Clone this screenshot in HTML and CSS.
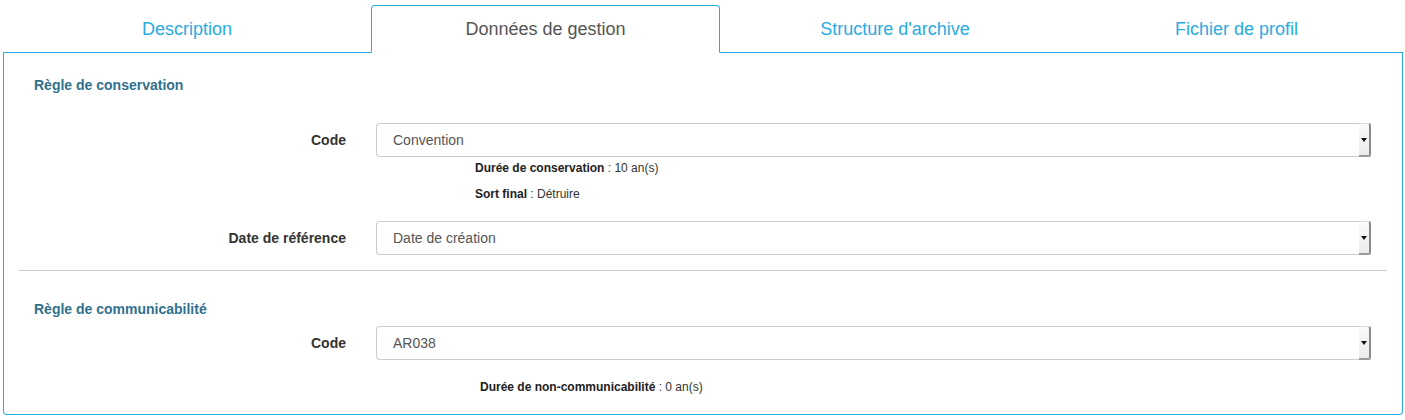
FILE: index.html
```html
<!DOCTYPE html>
<html lang="fr">
<head>
  <meta charset="UTF-8" />
  <title>Profil d'archivage</title>
  <link rel="stylesheet" href="styles.css">
</head>
<body>
  <div class="tabs">
    <div class="tab">Description</div>
    <div class="tab active">Données de gestion</div>
    <div class="tab">Structure d'archive</div>
    <div class="tab">Fichier de profil</div>
  </div>

  <div class="panel">
    <h3 class="section-title">Règle de conservation</h3>

    <div class="form-row first">
      <label class="form-label">Code</label>
      <div class="select">
        <span class="select-value">Convention</span>
        <span class="select-btn"><span class="caret"></span></span>
      </div>
    </div>
    <div class="help">
      <p class="help-line"><b>Durée de conservation</b> : 10 an(s)</p>
      <p class="help-line second"><b>Sort final</b> : Détruire</p>
    </div>

    <div class="form-row date-row">
      <label class="form-label">Date de référence</label>
      <div class="select">
        <span class="select-value">Date de création</span>
        <span class="select-btn"><span class="caret"></span></span>
      </div>
    </div>

    <hr class="divider">

    <h3 class="section-title">Règle de communicabilité</h3>

    <div class="form-row comm-row">
      <label class="form-label">Code</label>
      <div class="select">
        <span class="select-value">AR038</span>
        <span class="select-btn"><span class="caret"></span></span>
      </div>
    </div>
    <div class="help help-comm">
      <p class="help-line"><b>Durée de non-communicabilité</b> : 0 an(s)</p>
    </div>
  </div>
</body>
</html>
```

FILE: styles.css
```css
* { box-sizing: border-box; }
body {
  margin: 0;
  padding: 5px 2px 0 3px;
  font-family: "Liberation Sans", Arial, sans-serif;
  background: #fff;
  color: #333;
}
.tabs {
  display: grid;
  grid-template-columns: 368px 349px 350px 1fr;
  height: 48px;
}
.tab {
  display: flex;
  align-items: center;
  justify-content: center;
  padding-top: 1px;
  font-size: 18px;
  color: #29abe2;
  border-bottom: 1px solid #29abe2;
}
.tab.active {
  color: #555;
  border: 1px solid #29abe2;
  border-bottom-color: #fff;
  border-radius: 4px 4px 0 0;
}
.panel {
  border: 1px solid #29abe2;
  border-top: none;
  border-radius: 0 0 4px 4px;
  padding: 22px 0 19px;
  height: 362px;
}
.section-title {
  margin: 0 0 0 30px;
  font-size: 14px;
  line-height: 20px;
  font-weight: bold;
  color: #31708f;
}
.form-row {
  display: flex;
  align-items: center;
  height: 34px;
}
.form-row.first { margin-top: 28px; }
.form-row.date-row { margin-top: 19px; }
.form-row.comm-row { margin-top: 7px; }
.form-label {
  width: 342px;
  text-align: right;
  font-size: 14px;
  font-weight: bold;
  color: #333;
}
.select {
  display: flex;
  align-items: stretch;
  margin-left: 30px;
  width: 995px;
  height: 34px;
  border: 1px solid #ccc;
  border-right: none;
  border-radius: 4px 0 0 4px;
  background: #fff;
}
.select-value {
  flex: 1;
  display: flex;
  align-items: center;
  padding-left: 16px;
  font-size: 14px;
  color: #555;
}
.select-btn {
  width: 12px;
  margin-top: -1px;
  margin-bottom: -1px;
  display: flex;
  align-items: center;
  justify-content: center;
  background: linear-gradient(#fafafa, #ececec);
  border-top: 1px solid #ddd;
  border-right: 2px solid #8a8a8a;
  border-bottom: 2px solid #9a9a9a;
  border-radius: 0 3px 3px 0;
}
.caret {
  width: 0;
  height: 0;
  border-left: 3px solid transparent;
  border-right: 3px solid transparent;
  border-top: 4px solid #111;
}
.help {
  margin: 3px 0 0 471px;
}
.help-comm {
  margin: 19px 0 0 476px;
}
.help-line {
  margin: 0;
  font-size: 12px;
  line-height: 16px;
  color: #333;
}
.help-line b { color: #222; }
.help-line.second { margin-top: 10px; }
.divider {
  margin: 15px 15px 28px;
  border: none;
  border-top: 1px solid #ccc;
}
```
